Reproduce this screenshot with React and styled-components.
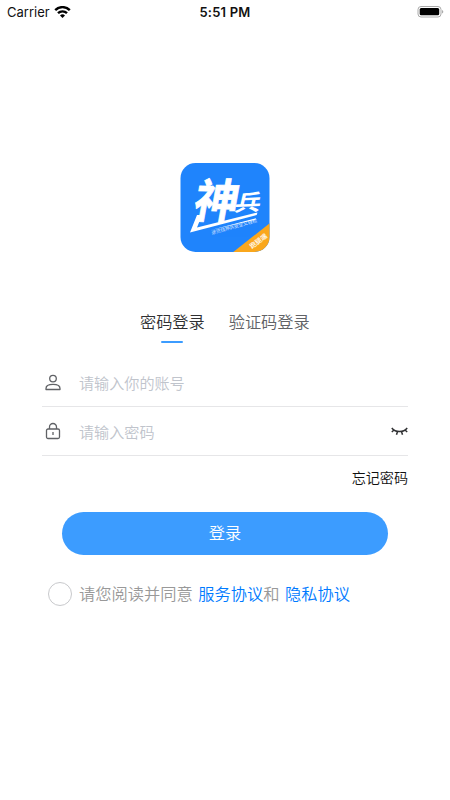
import React, { useState } from 'react';
import styled, { createGlobalStyle } from 'styled-components';

const GlobalStyle = createGlobalStyle`
  * {
    box-sizing: border-box;
  }
  body {
    margin: 0;
    background: #fff;
    font-family: 'Noto Sans CJK SC', sans-serif;
    font-weight: 350;
  }
`;
const Screen = styled('div')`
  display: flex;
  flex-direction: column;
  width: 450px;
  height: 800px;
  overflow: hidden;
  background: #fff;
`;
const StatusBar = styled('header')`
  display: grid;
  grid-template-columns: 1fr auto 1fr;
  align-items: center;
  height: 24px;
  padding: 0 6px 0 7px;
  font-family: Inter, sans-serif;
  font-size: 13px;
  font-weight: 400;
  color: #111;
`;
const Carrier = styled('div')`
  display: flex;
  align-items: center;
  gap: 4px;
`;
const Clock = styled('div')`
  margin-left: -1px;
  font-weight: 600;
  letter-spacing: 0.2px;
`;
const BatteryIcon = styled('svg')`
  justify-self: end;
`;
const Logo = styled('svg')`
  display: block;
  margin: 139px auto 0;
  font-family: 'Noto Sans CJK SC', sans-serif;
`;
const Tabs = styled('nav')`
  display: flex;
  gap: 24px;
  margin: 56px 0 0 140px;
`;
const Tab = styled('button')`
  display: flex;
  flex-direction: column;
  align-items: center;
  gap: 8px;
  padding: 0;
  border: 0;
  background: none;
  font: inherit;
  font-size: 16.2px;
  line-height: 24px;
  color: ${({ $active }) => ($active ? '#303133' : '#606266')};
  &::after {
    content: '';
    width: 22px;
    height: 2px;
    border-radius: 1px;
    background: ${({ $active }) => ($active ? '#3c9cff' : 'transparent')};
  }
`;
const Form = styled('form')`
  display: flex;
  flex-direction: column;
  margin: 15px 42px 0;
`;
const Field = styled('label')`
  display: flex;
  align-items: center;
  height: 49px;
  padding-top: 2px;
  border-bottom: 1px solid #e6e6e8;
`;
const FieldIcon = styled('svg')`
  flex: none;
  width: 22px;
  height: 22px;
  margin-right: 15px;
`;
const Input = styled('input')`
  flex: 1;
  min-width: 0;
  padding: 0 0 2px;
  border: 0;
  outline: 0;
  background: none;
  font: inherit;
  font-size: 15.1px;
  line-height: 24px;
  color: #303133;
  &::placeholder {
    color: #c0c4cc;
    opacity: 1;
  }
`;
const Forgot = styled('a')`
  align-self: flex-end;
  margin-top: 10px;
  font-size: 14.1px;
  line-height: 22px;
  color: #111;
`;
const Submit = styled('button')`
  height: 43px;
  margin: 24px 20px 0;
  padding: 0 0 3px;
  border: 0;
  border-radius: 22px;
  background: #3c9cff;
  font: inherit;
  font-size: 16.2px;
  color: #fff;
`;
const Agreement = styled('div')`
  display: flex;
  align-items: center;
  margin: 27px 0 0 6px;
  font-size: 16.25px;
  line-height: 22px;
  color: #999;
  white-space: nowrap;
`;
const AgreementText = styled('div')`
  padding-bottom: 2px;
`;
const Radio = styled('span')`
  width: 24px;
  height: 24px;
  margin-right: 7px;
  border: 1px solid #c8c9cc;
  border-radius: 50%;
`;
const Policy = styled('a')`
  margin-left: 5.5px;
  color: #007aff;
`;

const WifiIcon = () => (
  <svg width="17" height="13" viewBox="0 0 17 13">
    <g fill="none" stroke="#000" strokeWidth="2.4">
      <path d="M1.2 4.1a10.4 10.4 0 0 1 14.6 0" />
      <path d="M4 7.2a6.4 6.4 0 0 1 9 0" />
    </g>
    <path d="M8.5 12L6 9.500a3.600 3.600 0 0 1 5 0z" />
  </svg>
);

const AppLogo = () => (
  <Logo width="90" height="90" viewBox="0 0 90 90">
    <defs>
      <clipPath id="logoShape">
        <rect x="0.5" width="89" height="89" rx="15" />
      </clipPath>
    </defs>
    <g clipPath="url(#logoShape)">
      <rect width="90" height="89" fill="#1f84fc" />
      <path d="M52 90L90 60v30z" fill="#faa71c" />
      <g fill="#fff">
        <text
          transform="matrix(1.16 0.02 -0.22 1.22 12 54.5)"
          fontSize="38"
          fontWeight="700"
          stroke="#fff"
          strokeWidth="0.6">
          神
        </text>
        <text
          transform="matrix(1.05 -0.04 -0.2 0.88 53.5 48)"
          fontSize="25"
          fontWeight="700">
          兵
        </text>
        <path d="M17 52h5l-5 12.500L77.500 49.500l-.8 2.500L10 69.500z" />
        <path d="M30 67.300l46-12-.5 1.500z" />
        <text
          transform="translate(32 71.500) rotate(-15.500)"
          fontSize="4.7"
          fontWeight="400"
          opacity="0.8">
          送货找神兵安全又轻松
        </text>
        <text
          transform="rotate(-38 72 86)"
          x="72"
          y="86"
          fontSize="6.6"
          fontWeight="500">
          跑腿端
        </text>
      </g>
    </g>
  </Logo>
);

const tabs = ['密码登录', '验证码登录'];

export default function App() {
  const [active, setActive] = useState(0);
  return (
    <Screen>
      <GlobalStyle />
      <StatusBar>
        <Carrier>
          Carrier
          <WifiIcon />
        </Carrier>
        <Clock>5:51 PM</Clock>
        <BatteryIcon width="27" height="12" viewBox="0 0 27 12">
          <rect
            x="1"
            y="0.5"
            width="23"
            height="10.5"
            rx="3"
            fill="none"
            stroke="#aaa"
          />
          <rect x="2.7" y="2" width="19.5" height="7.3" rx="1.5" />
          <path d="M25 4c1.8.6 1.8 3 0 3.6z" fill="#aaa" />
        </BatteryIcon>
      </StatusBar>
      <AppLogo />
      <Tabs>
        {tabs.map((label, i) => (
          <Tab key={label} $active={i === active} onClick={() => setActive(i)}>
            {label}
          </Tab>
        ))}
      </Tabs>
      <Form onSubmit={e => e.preventDefault()}>
        <Field>
          <FieldIcon
            viewBox="0 0 22 22"
            fill="none"
            stroke="#606266"
            strokeWidth="1.3">
            <circle cx="11" cy="6.6" r="3.3" />
            <path
              d="M4 17.500v-1.100c0-2.700 2.800-4 7-4s7 1.300 7 4v1.100z"
              strokeLinejoin="round"
            />
          </FieldIcon>
          <Input placeholder="请输入你的账号" />
        </Field>
        <Field>
          <FieldIcon
            viewBox="0 0 22 22"
            fill="none"
            stroke="#606266"
            strokeWidth="1.3">
            <rect x="4.5" y="8" width="13" height="9.5" rx="1.5" />
            <path d="M7.500 8V6a3.500 3.500 0 0 1 7 0v2M11 11v3" />
          </FieldIcon>
          <Input type="password" placeholder="请输入密码" />
          <svg
            width="17"
            height="10"
            viewBox="0 0 17 10"
            fill="none"
            stroke="#303133"
            strokeWidth="1.5">
            <path d="M.8 1c3.800 4.800 11.600 4.800 15.400 0M3 3L.8 5M6.500 4.500L5.500 7.700M10.500 4.500l1 3.200M14 3l2.200 2" />
          </svg>
        </Field>
        <Forgot>忘记密码</Forgot>
        <Submit>登录</Submit>
        <Agreement>
          <Radio />
          <AgreementText>
            请您阅读并同意
            <Policy>服务协议</Policy>和<Policy>隐私协议</Policy>
          </AgreementText>
        </Agreement>
      </Form>
    </Screen>
  );
}
